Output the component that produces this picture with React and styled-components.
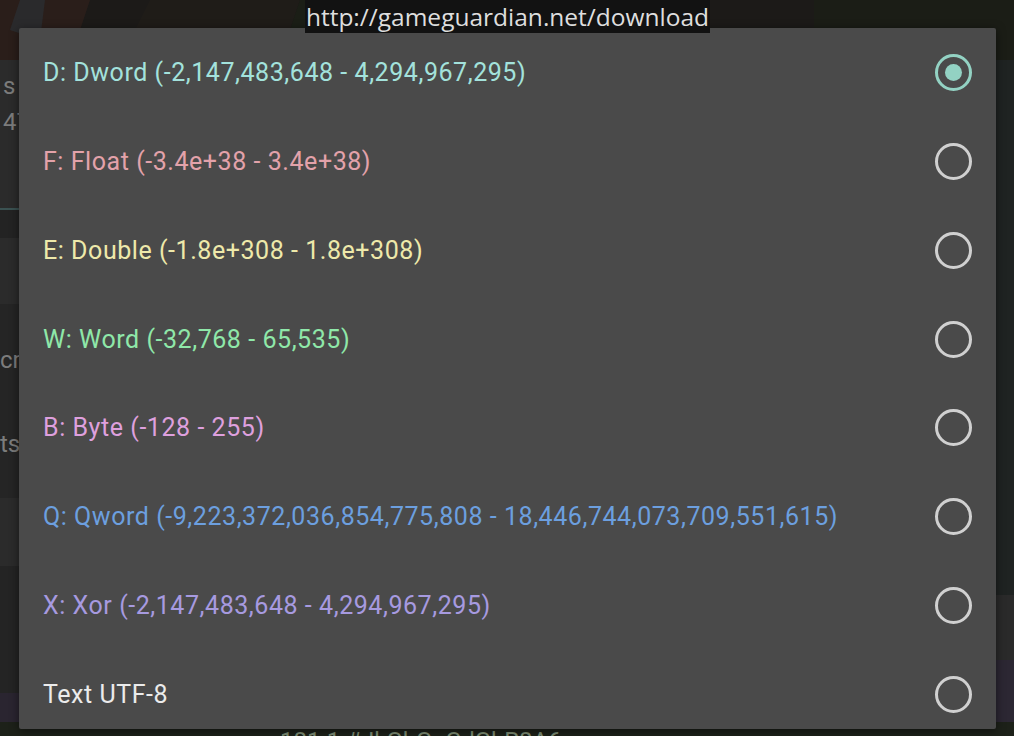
import React from 'react'
import styled, { createGlobalStyle } from 'styled-components'

const GlobalStyle = createGlobalStyle`
  html, body {
    margin: 0;
    padding: 0;
    background: #1d2119;
    overflow: hidden;
  }
  body {
    font-family: Roboto, "Noto Sans", "DejaVu Sans", sans-serif;
  }
`

const types = [
  { label: 'D: Dword (-2,147,483,648 - 4,294,967,295)', color: '#a3e2dc', checked: true },
  { label: 'F: Float (-3.4e+38 - 3.4e+38)', color: '#e3a2aa' },
  { label: 'E: Double (-1.8e+308 - 1.8e+308)', color: '#eee9aa' },
  { label: 'W: Word (-32,768 - 65,535)', color: '#8fe8a9' },
  { label: 'B: Byte (-128 - 255)', color: '#dea0de' },
  { label: 'Q: Qword (-9,223,372,036,854,775,808 - 18,446,744,073,709,551,615)', color: '#6c9fdf' },
  { label: 'X: Xor (-2,147,483,648 - 4,294,967,295)', color: '#a79ae0' },
  { label: 'Text UTF-8', color: '#ebebeb' },
]

const Screen = styled.div`
  position: relative;
  width: 1014px;
  height: 736px;
  overflow: hidden;
`

const Backdrop = styled.div`
  display: grid;
  grid-template-columns: 1fr 200px;
  grid-template-rows: 722px 1fr;
  height: 100%;
`

const Column = styled.div`
  display: grid;
  grid-template-rows: ${p => p.$rows};
  min-width: 0;
`

const Band = styled.div`
  background: ${p => p.$bg};
  color: #7c7c7c;
  font-size: 24px;
  display: flex;
  flex-direction: column;
  gap: ${p => p.$gap || '6px'};
  padding: ${p => p.$pad || '0'};
  overflow: hidden;
  white-space: nowrap;
  border-bottom: ${p => (p.$line ? '2px solid #3b5252' : 'none')};
`

const Scene = styled.svg`
  display: block;
  width: 100%;
  height: 100%;
`

const Footer = styled.div`
  grid-column: 1 / -1;
  background: #1d2119;
  color: #7f8f76;
  font-size: 24px;
  line-height: 1;
  padding: 7px 0 0 280px;
  white-space: nowrap;
  overflow: hidden;
`

const UrlBanner = styled.div`
  position: absolute;
  top: 0;
  left: 305px;
  width: 405px;
  height: 33px;
  background: #121212;
  color: #dedede;
  font-family: "Open Sans", "DejaVu Sans", sans-serif;
  font-size: 24.5px;
  line-height: 33px;
  text-align: center;
  white-space: nowrap;
  z-index: 2;
`

const Dialog = styled.div`
  position: absolute;
  top: 28px;
  left: 19px;
  width: 977px;
  height: 701px;
  background: #4a4a4a;
  border-radius: 2px;
  overflow: hidden;
  box-shadow: 0 2px 10px rgba(0, 0, 0, 0.5);
  z-index: 1;
`

const Option = styled.label`
  display: flex;
  align-items: center;
  justify-content: space-between;
  height: 88.86px;
  padding: 0 24px;
  box-sizing: border-box;
  cursor: pointer;
`

const Label = styled.span`
  color: ${p => p.$color};
  font-size: 25px;
  letter-spacing: 0.55px;
  white-space: nowrap;
`

const Radio = styled.span`
  display: flex;
  align-items: center;
  justify-content: center;
  width: 37px;
  height: 37px;
  box-sizing: border-box;
  border-radius: 50%;
  border: 3px solid ${p => (p.$checked ? '#93d2c3' : '#d0d0d0')};

  &::after {
    content: '';
    width: 17px;
    height: 17px;
    border-radius: 50%;
    background: #93d2c3;
    display: ${p => (p.$checked ? 'block' : 'none')};
  }
`

export default function App() {
  return (
    <>
      <GlobalStyle />
      <Screen>
        <Backdrop>
          <Column $rows="60px 150px 28px 66px 194px 68px 127px 29px">
            <Band $bg="#1c1a18">
              <Scene viewBox="0 0 814 60" preserveAspectRatio="none">
                <polygon points="0,0 90,0 70,60 0,60" fill="#2a1e1a" />
                <polygon points="20,0 45,0 40,40 10,30" fill="#2a2a2c" />
                <polygon points="150,0 300,0 280,60 120,60" fill="#1f1c18" />
                <polygon points="300,0 520,0 500,60 280,60" fill="#1b1e16" />
              </Scene>
            </Band>
            <Band $bg="#2b2b2b" $pad="12px 0 0 3px" $gap="8px" $line>
              <span>s</span>
              <span>47</span>
            </Band>
            <Band $bg="#232323" />
            <Band $bg="#2b2b2b" />
            <Band $bg="#252525" $pad="42px 0 0 0" $gap="56px">
              <span>cr</span>
              <span>ts</span>
            </Band>
            <Band $bg="#2b2b2b" />
            <Band $bg="#242424" />
            <Band $bg="#2a2530" />
          </Column>
          <Column $rows="60px 535px 65px 62px">
            <Band $bg="#1b1d16" />
            <Band $bg="#1f2322" />
            <Band $bg="#2a2a2a" $pad="18px 0 0 0">
              <span>CA</span>
            </Band>
            <Band $bg="#2c2733" />
          </Column>
          <Footer>181.1 #JkGhGnCdGhR8A6</Footer>
        </Backdrop>
        <UrlBanner>http://gameguardian.net/download</UrlBanner>
        <Dialog>
          {types.map(t => (
            <Option key={t.label}>
              <Label $color={t.color}>{t.label}</Label>
              <Radio $checked={!!t.checked} />
            </Option>
          ))}
        </Dialog>
      </Screen>
    </>
  )
}
